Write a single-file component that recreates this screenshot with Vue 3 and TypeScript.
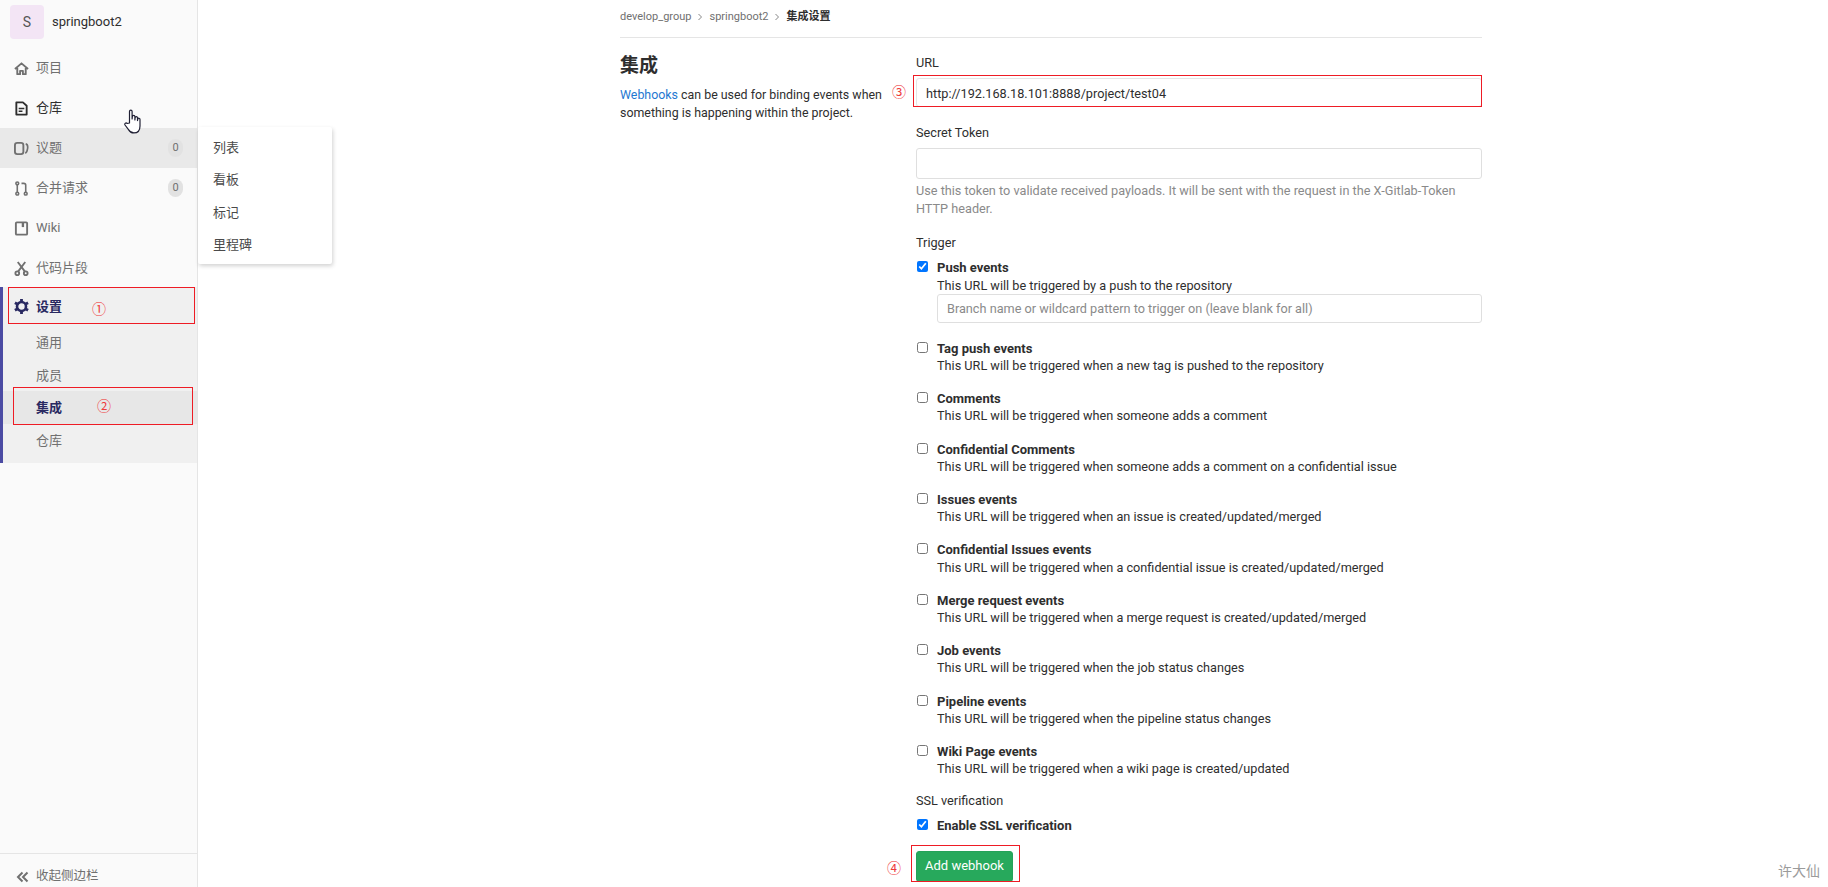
<script setup lang="ts">
interface Trigger { title: string; desc: string }
const triggers: Trigger[] = [
  { title: 'Tag push events', desc: 'This URL will be triggered when a new tag is pushed to the repository' },
  { title: 'Comments', desc: 'This URL will be triggered when someone adds a comment' },
  { title: 'Confidential Comments', desc: 'This URL will be triggered when someone adds a comment on a confidential issue' },
  { title: 'Issues events', desc: 'This URL will be triggered when an issue is created/updated/merged' },
  { title: 'Confidential Issues events', desc: 'This URL will be triggered when a confidential issue is created/updated/merged' },
  { title: 'Merge request events', desc: 'This URL will be triggered when a merge request is created/updated/merged' },
  { title: 'Job events', desc: 'This URL will be triggered when the job status changes' },
  { title: 'Pipeline events', desc: 'This URL will be triggered when the pipeline status changes' },
  { title: 'Wiki Page events', desc: 'This URL will be triggered when a wiki page is created/updated' },
]
const flyout = ['列表', '看板', '标记', '里程碑']
</script>

<template>
  <div class="page">
    <aside class="sidebar">
      <div class="project">
        <div class="avatar">S</div>
        <span class="project-name">springboot2</span>
      </div>
      <nav class="nav">
        <a class="item">
          <svg class="icon" viewBox="0 0 16 16" fill="none" stroke="currentColor" stroke-width="2"><path d="M1 8.500 8 2.500l7 6M3.500 7.500V14h3v-3.500h3V14h3V7.500" stroke-linejoin="round"/></svg>
          <span>项目</span>
        </a>
        <a class="item dark">
          <svg class="icon" viewBox="0 0 16 16" fill="none" stroke="currentColor" stroke-width="2"><path d="M2.500 1.500h7L13.500 5v9.500h-11z" stroke-linejoin="round"/><path d="M5 8h6M5 11h4" stroke-width="1.600"/></svg>
          <span>仓库</span>
        </a>
        <a class="item hover">
          <svg class="icon" viewBox="0 0 16 16" fill="none" stroke="currentColor" stroke-width="2"><rect x="1" y="2" width="9" height="12" rx="2.500"/><path d="M12.500 3c2 .5 2.500 1.500 2 5-.3 2-1 4.500-2.500 5" stroke-width="1.800"/></svg>
          <span>议题</span>
          <em class="badge">0</em>
        </a>
        <a class="item">
          <svg class="icon" viewBox="0 0 16 16" fill="none" stroke="currentColor" stroke-width="1.700"><circle cx="3.500" cy="13.500" r="1.500"/><circle cx="3.500" cy="2.500" r="1.500"/><circle cx="12.500" cy="13.500" r="1.500"/><path d="M3.500 4v8M12.500 12V4.500c0-1.200-.8-2-2-2H8"/></svg>
          <span>合并请求</span>
          <em class="badge">0</em>
        </a>
        <a class="item">
          <svg class="icon" viewBox="0 0 16 16" fill="none" stroke="currentColor" stroke-width="2"><rect x="2" y="1.500" width="12" height="13" rx="1"/><path d="M9.500 1.500v5" stroke-width="2.500"/></svg>
          <span>Wiki</span>
        </a>
        <a class="item">
          <svg class="icon" viewBox="0 0 16 16" fill="none" stroke="currentColor" stroke-width="2"><circle cx="3.500" cy="13" r="2"/><circle cx="12.500" cy="13" r="2"/><path d="M4.500 11 12 1M11.500 11 4 1"/></svg>
          <span>代码片段</span>
        </a>
        <div class="section">
          <a class="item head">
            <svg class="icon gear" viewBox="0 0 16 16" fill="none" stroke="currentColor"><circle cx="8" cy="8" r="4.800" stroke-width="2.800"/><path d="M8 0v3M8 13v3M1 4l2.600 1.500M12.400 10.500 15 12M1 12l2.600-1.500M12.400 5.500 15 4" stroke-width="3"/></svg>
            <span>设置</span>
          </a>
          <a class="sub">通用</a>
          <a class="sub">成员</a>
          <a class="sub current">集成</a>
          <a class="sub">仓库</a>
        </div>
      </nav>
      <div class="collapse">
        <svg class="chev" viewBox="0 0 12 12" fill="none" stroke="currentColor" stroke-width="2"><path d="M6 1.500 1.500 6 6 10.500M11 1.500 6.500 6l4.500 4.500"/></svg>
        <span>收起侧边栏</span>
      </div>

      <div class="flyout">
        <a v-for="f in flyout" :key="f">{{ f }}</a>
      </div>
      <i class="redbox box1"></i>
      <i class="redbox box2"></i>
      <b class="mark m1">①</b>
      <b class="mark m2">②</b>
      <svg class="hand" viewBox="0 0 20 26" fill="#fff" stroke="#1f1f33" stroke-width="1.200" stroke-linejoin="round">
        <path d="M5.500 14V2.500c0-1.800 2.600-1.800 2.600 0V10l.3-2.500c.2-1.500 2.400-1.500 2.500 0V11l.2-2.300c.2-1.400 2.300-1.300 2.400.1v2.800l.3-1.600c.3-1.200 2.200-1 2.200.4v6.500c0 4-2 7-6.200 7-3 0-4.300-1.500-5.300-3.300L1 16c-.8-1.500 1-2.800 2.200-1.500z"/>
      </svg>
    </aside>

    <main class="main">
      <div class="breadcrumb">
        <span>develop_group</span>
        <svg class="crumb" viewBox="0 0 8 8" fill="none" stroke="#888" stroke-width="1"><path d="m2.500 1 3 3-3 3"/></svg>
        <span>springboot2</span>
        <svg class="crumb" viewBox="0 0 8 8" fill="none" stroke="#888" stroke-width="1"><path d="m2.500 1 3 3-3 3"/></svg>
        <strong>集成设置</strong>
      </div>
      <div class="content">
        <section class="intro">
          <h4>集成</h4>
          <p><a class="link">Webhooks</a> can be used for binding events when something is happening within the project.</p>
        </section>
        <form class="form" @submit.prevent>
          <label class="field-label">URL</label>
          <div class="url-wrap">
            <input class="input url" type="text" value="http://192.168.18.101:8888/project/test04" />
            <i class="redbox box3"></i>
            <b class="mark m3">③</b>
          </div>
          <label class="field-label secret-label">Secret Token</label>
          <input class="input secret" type="text" />
          <p class="help">Use this token to validate received payloads. It will be sent with the request in the X-Gitlab-Token HTTP header.</p>
          <label class="field-label trigger-label">Trigger</label>

          <div class="check first">
            <input type="checkbox" checked />
            <div>
              <strong>Push events</strong>
              <p>This URL will be triggered by a push to the repository</p>
              <input class="input branch" type="text" placeholder="Branch name or wildcard pattern to trigger on (leave blank for all)" />
            </div>
          </div>
          <div v-for="t in triggers" :key="t.title" class="check">
            <input type="checkbox" />
            <div>
              <strong>{{ t.title }}</strong>
              <p>{{ t.desc }}</p>
            </div>
          </div>

          <label class="field-label ssl-label">SSL verification</label>
          <div class="check ssl">
            <input type="checkbox" checked />
            <div><strong>Enable SSL verification</strong></div>
          </div>
          <div class="submit">
            <button class="btn" type="button">Add webhook</button>
            <i class="redbox box4"></i>
            <b class="mark m4">④</b>
          </div>
        </form>
      </div>
    </main>
    <span class="watermark">许大仙</span>
  </div>
</template>

<style>
html, body { margin: 0; height: 100%; overflow: hidden; background: #fff; }
</style>

<style scoped>
.page {
  position: relative;
  display: flex;
  height: 887px;
  overflow: hidden;
  background: #fff;
  color: #2e2e2e;
  font-family: Roboto, "Noto Sans CJK SC", sans-serif;
  font-size: 12.7px;
  line-height: 18.2px;
}
.sidebar {
  position: relative;
  flex: none;
  box-sizing: border-box;
  width: 198px;
  height: 887px;
  display: flex;
  flex-direction: column;
  background: #fafafa;
  border-right: 1px solid #e5e5e5;
}
.project { display: flex; align-items: center; gap: 8px; padding: 5px 10px 0; height: 34px; margin-bottom: 9px; }
.avatar {
  width: 34px; height: 34px; border-radius: 4px; background: #f3e5f5; color: #555;
  display: flex; align-items: center; justify-content: center; font-size: 14px;
}
.project-name { font-size: 13px; color: #2e2e2e; }
.nav { display: flex; flex-direction: column; }
.item {
  box-sizing: border-box;
  display: flex; align-items: center; height: 40px; padding: 1px 14px 0; gap: 7px;
  color: #707070; font-size: 13px;
}
.item > .icon { margin-top: -1px; }
.item.dark { color: #2e2e2e; }
.item.hover { background: #e9e9e9; }
.icon { width: 15px; height: 15px; flex: none; }
.badge {
  margin-left: auto; margin-top: -1px; font-style: normal; font-size: 11px; color: #707070; background: #e2e2e2;
  border-radius: 8px; width: 15px; height: 18px; line-height: 18px; text-align: center;
}
.section { margin-top: -1px; background: #f0f0f0; border-left: 3px solid #4b4ba3; padding-bottom: 7px; }
.item.head { height: 39px; padding-left: 11px; color: #292961; font-weight: 700; }
.sub { display: block; height: 32.500px; line-height: 34px; padding-left: 33px; color: #707070; font-size: 13px; }
.sub.current { background: #e7e7e7; color: #292961; font-weight: 700; }
.collapse {
  margin-top: auto; box-sizing: border-box; height: 34px; border-top: 1px solid #e5e5e5;
  display: flex; align-items: center; gap: 7px; padding: 12px 16px 0; color: #707070; font-size: 12.500px;
}
.chev { width: 13px; height: 12px; flex: none; }
.flyout {
  position: absolute; left: 198px; top: 127px; width: 134px; height: 137px;
  box-sizing: border-box; padding: 4px 0; background: #fff; border-radius: 2px;
  box-shadow: 1px 2px 4px rgba(0, 0, 0, 0.18); z-index: 3;
}
.flyout a { display: block; height: 32.300px; line-height: 33.500px; padding-left: 15px; font-size: 13px; color: #4a4a4a; }
.redbox { position: absolute; box-sizing: border-box; border: 1px solid #ee1c25; pointer-events: none; }
.box1 { left: 8px; top: 287px; width: 187px; height: 37px; }
.box2 { left: 13px; top: 387px; width: 180px; height: 38px; }
.box3 { left: -3px; top: -3px; width: 569px; height: 32px; }
.box4 { left: -5px; top: -6px; width: 109px; height: 37px; }
.mark { position: absolute; color: #ee3b3b; font-size: 14px; font-weight: 400; line-height: 14px; }
.m1 { left: 92px; top: 302px; }
.m2 { left: 97px; top: 399px; }
.m3 { left: -24px; top: 7px; }
.m4 { left: -29px; top: 10px; }
.hand { position: absolute; left: 124px; top: 109px; width: 20px; height: 26px; }

.main { flex: 1; min-width: 0; padding-left: 422px; }
.breadcrumb {
  width: 862px; height: 34px; padding-bottom: 3px; border-bottom: 1px solid #e5e5e5;
  display: flex; align-items: center; font-size: 11px; color: #707070;
}
.breadcrumb strong { color: #2e2e2e; font-weight: 700; }
.crumb { width: 8px; height: 8px; margin: 0 5px; }
.content { display: grid; grid-template-columns: 296px 566px; width: 862px; padding-top: 15px; }
.intro h4 { margin: 0; padding-top: 1px; font-size: 19px; line-height: 24px; font-weight: 700; color: #2e2e2e; }
.intro p { margin: 8px 0 0; width: 270px; line-height: 18px; font-size: 12.400px; }
.link { color: #1f78d1; }
.form { display: block; }
.field-label { display: block; box-sizing: border-box; height: 18px; padding-top: 1px; color: #2e2e2e; }
.url-wrap { position: relative; margin-top: 7px; height: 29px; }
.input {
  display: block; box-sizing: border-box; width: 100%; border: 1px solid #dfdfdf; border-radius: 3px;
  background: #fff; padding: 0 9px; font: inherit; color: #2e2e2e; outline: none;
}
.url { height: 29px; border-color: #e5e5e5; padding-top: 2px; }
.secret-label { margin-top: 16px; }
.secret { margin-top: 7px; height: 31px; }
.help { margin: 3px 0 0; color: #8a8a8a; }
.trigger-label { margin-top: 15px; }
.check { display: flex; gap: 9px; margin-bottom: 14px; }
.check input[type="checkbox"] { flex: none; width: 11px; height: 11px; margin: 3px 0 0 1px; }
.check > div { flex: 1; min-width: 0; }
.check > div > strong { font-size: 13px; font-weight: 700; display: block; padding-top: 1px; margin-bottom: -1px; }
.check p { margin: 0; color: #2e2e2e; }
.check.first { margin-top: 7px; margin-bottom: 16px; }
.branch { height: 29px; margin-top: -1px; }
.branch::placeholder { color: #8a8a8a; opacity: 1; }
.ssl-label { margin-top: -1px; }
.check.ssl { margin-top: 7px; margin-bottom: 16px; }
.submit { position: relative; width: 97px; height: 31px; }
.btn {
  width: 97px; height: 31px; box-sizing: border-box; border: 1px solid #24a259; border-radius: 3px;
  background: #27a95c; color: #fff; font: inherit; font-size: 13px; padding: 0;
}
.watermark { position: absolute; right: 8px; top: 862px; font-size: 14px; color: #9b9b9b; }
</style>
